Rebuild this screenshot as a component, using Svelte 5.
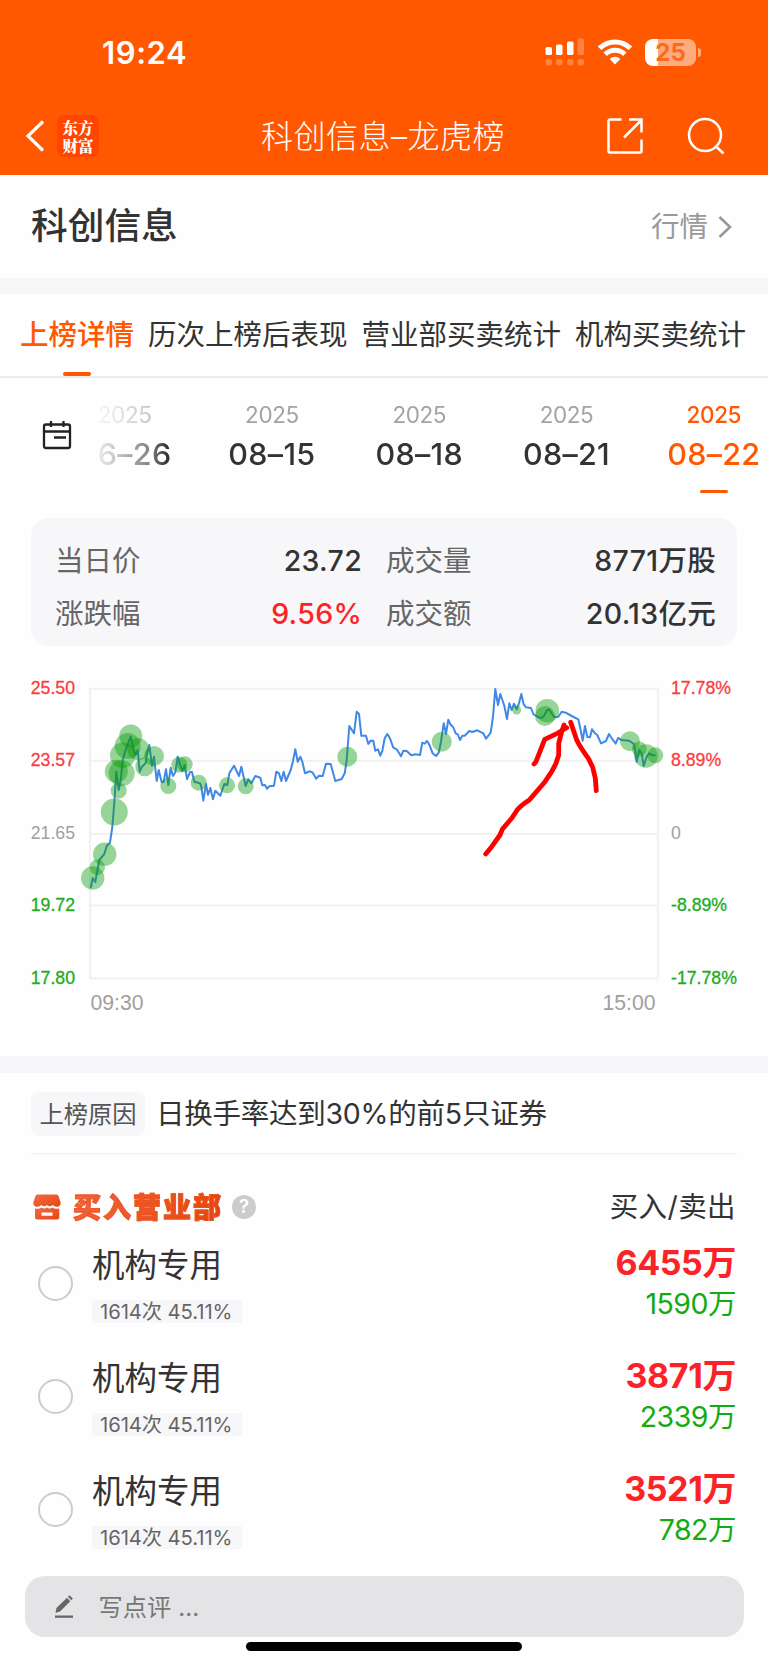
<script lang="ts">
type Bubble = { x: number; y: number; r: number };

const tabs = ['上榜详情', '历次上榜后表现', '营业部买卖统计', '机构买卖统计'];

const dates = [
	{ year: '2025', day: '06–26' },
	{ year: '2025', day: '08–15' },
	{ year: '2025', day: '08–18' },
	{ year: '2025', day: '08–21' },
	{ year: '2025', day: '08–22' },
];

let activeTab = $state(0);
let activeDate = $state(4);

const stats = [
	{ label: '当日价', value: '23.72' },
	{ label: '成交量', value: '8771万股' },
	{ label: '涨跌幅', value: '9.56%', up: true },
	{ label: '成交额', value: '20.13亿元' },
];

const axis = [
	{ y: 18.7, price: '25.50', pct: '17.78%', tone: 'up' },
	{ y: 90.7, price: '23.57', pct: '8.89%', tone: 'up' },
	{ y: 164, price: '21.65', pct: '0', tone: 'flat' },
	{ y: 235.4, price: '19.72', pct: '-8.89%', tone: 'down' },
	{ y: 308.3, price: '17.80', pct: '-17.78%', tone: 'down' },
];

const line = `90.7,218 92.7,208 95.3,212 99.3,190 104.3,184 106.7,176 110,172.7 112.3,157 114.3,133
	116.3,101.7 118.7,120 120.7,110 122.7,90 125,82 127.3,75 130.7,66.7 133.3,78 135.3,85 137.7,80
	139.7,101.7 142,96.7 145.7,93 147.3,81.7 149.3,75 152,95.7 154,86.7 156.7,111 158.7,100
	161.7,112.3 163.7,111.7 166,99.3 168.3,115 170.7,97.7 173,106 175.3,102.3 177.7,86.7 180.3,95
	182.3,101 184.7,95 187,109 190,102 192,102 194.3,111.7 200,113.3 201.3,116.7 203.3,130.7
	206,114 208,124.7 210.3,118 213,129.3 215.3,120.7 220.3,125.7 224.3,114 227.3,115 229.3,103.3
	234,95.7 239,106 241.3,96.7 245.7,116 248.3,109.3 251.3,113.3 255.3,106 260.3,107.7
	262.3,115.3 265,115 267,118.7 269.3,116.3 274,115.7 276.3,101.7 279,103.3 281.3,111
	283.7,101.7 286,111 290.7,100 293,91 295.3,79.3 297.7,91.7 300.3,86.7 302.3,91.7 305,103.3
	310,101.3 312.7,102.7 316.3,108.7 319,105.7 322.7,106 326,93.7 330.7,94 335.3,111 341.7,109
	344.7,103.3 346.7,90 349.3,56 354,63.3 356.7,41.7 359,44 361.3,65.7 366,65.7 368.3,74
	370.7,70.7 373.3,70.7 375.3,80.7 378,79.3 380.3,85.7 382.3,81 384.7,68.3 387.3,64 389.7,67.7
	393.3,77.7 396.7,79.3 401,86.3 403.3,80.7 406.7,81 411.3,85.3 415.3,84.3 420,85 422.3,72.7
	424.7,73.7 427,71 429.3,74.7 432.7,83.3 436,86 438.7,82.7 441,71.7 443.7,53.3 446,64
	448.3,49.7 450.7,54.7 453.3,57.3 455.7,63.3 457.7,64.3 460,70 462.3,65.7 464.7,65.7 469.3,61
	472.3,62 477.3,60.3 483.3,63.3 486,68.7 490.7,62.7 493,46.7 495.3,19 498,35 500.3,24
	504.3,35.7 507,49 509.3,33.3 511.7,40 514,33.7 516.7,39.3 519,33.3 521.3,24 523.7,34.3
	526,37.3 531,38 533.3,44 538.3,47.3 541.7,48 544,46 546.7,40.7 549,39.3 551.7,43.3 554.3,47.3
	558.3,46.7 561.7,41.7 565.7,42.7 571.7,46 578.3,49.3 580.3,58.3 582.7,70.7 585,56 587.3,67
	590,67.3 592,59.3 595,63.3 597.3,65 601,73.3 606,71 609,64 612.3,69 615.7,73.7 618,68
	621.7,70 629.3,70.7 634,74 636.7,91.7 639.3,80 641.7,83.3 643.7,96 646.7,86.7 649.3,83.3
	652,85.3 655.3,85.3`;

const bubbles: Bubble[] = [
	[92.7, 208, 11.7], [97.3, 197.3, 7.7], [104.7, 184.3, 11.7], [114.3, 142, 13.5],
	[118.7, 120.7, 8], [116.3, 101.3, 11.5], [121.7, 103.3, 13], [122.7, 85.3, 12.7],
	[127.7, 76, 13], [130.7, 66, 11.5], [138.3, 79.3, 11], [144.7, 96.7, 9.5],
	[154, 86, 10], [168.3, 116, 8], [179.3, 94.7, 8], [184.7, 94.3, 8],
	[198.7, 112.7, 8], [227, 115.3, 8], [245.7, 116.3, 8], [347.3, 86.7, 10],
	[441.7, 71.7, 10], [516.7, 40, 4.5], [547.3, 40.7, 11.8], [545, 46, 10],
	[630, 71.3, 10], [639.3, 79, 7.5], [646, 86, 11.8], [655.3, 85.3, 8],
].map(([x, y, r]) => ({ x, y, r }));

const seats = [
	{ name: '机构专用', tag: '1614次 45.11%', buy: '6455万', sell: '1590万' },
	{ name: '机构专用', tag: '1614次 45.11%', buy: '3871万', sell: '2339万' },
	{ name: '机构专用', tag: '1614次 45.11%', buy: '3521万', sell: '782万' },
];
</script>

<div class="page">
	<header>
		<div class="status">
			<span class="time">19:24</span>
			<div class="status-icons">
				<svg width="40" height="28" viewBox="0 0 40 28" fill="#fff">
					<rect x="0.5" y="9" width="6.5" height="8" rx="1.6" />
					<rect x="11" y="6.5" width="6.5" height="10.5" rx="1.6" />
					<rect x="22" y="3.5" width="6.5" height="13.5" rx="1.6" />
					<g opacity="0.25">
						<rect x="32.5" y="0.5" width="6.5" height="16.5" rx="1.6" />
						<rect x="0.5" y="21" width="6.5" height="6.5" rx="2.4" />
						<rect x="11" y="21" width="6.5" height="6.5" rx="2.4" />
						<rect x="22" y="21" width="6.5" height="6.5" rx="2.4" />
						<rect x="32.5" y="21" width="6.5" height="6.5" rx="2.4" />
					</g>
				</svg>
				<svg class="wifi" width="34" height="26" viewBox="0 0 34 26" fill="none" stroke="#fff" stroke-width="5">
					<path d="M1.6 9.3a22 22 0 0 1 30.8 0" />
					<path d="M7.2 15.2a14 14 0 0 1 19.6 0" />
					<path d="M17 25.4l-5.3-5.5a7.6 7.6 0 0 1 10.6 0z" fill="#fff" stroke="none" />
				</svg>
				<div class="battery"><span>25</span></div>
				<i class="battery-tip"></i>
			</div>
		</div>
		<div class="nav">
			<svg class="back" width="20" height="32" viewBox="0 0 20 32" fill="none" stroke="#fff" stroke-width="3.2">
				<path d="M18 1.5L3 16l15 14.5" />
			</svg>
			<div class="logo"><span>东方</span><span>财富</span></div>
			<h1>科创信息–龙虎榜</h1>
			<svg class="share" width="36" height="36" viewBox="0 0 36 36" fill="none" stroke="#fff" stroke-width="2.5">
				<path d="M14.5 1.5H3A1.5 1.5 0 0 0 1.5 3v30A1.5 1.5 0 0 0 3 34.5h30a1.5 1.5 0 0 0 1.5-1.5V21.5" />
				<path d="M17 19.5L34 2.500M22 1.5h12.500v13" />
			</svg>
			<svg class="search" width="38" height="38" viewBox="0 0 38 38" fill="none" stroke="#fff" stroke-width="2.5">
				<circle cx="18" cy="18" r="16" />
				<path d="M28.5 29l8 7.5" />
			</svg>
		</div>
	</header>

	<section class="stock">
		<h2>科创信息</h2>
		<span class="quote">行情</span>
		<svg width="14" height="24" viewBox="0 0 14 24" fill="none" stroke="#999" stroke-width="2.6">
			<path d="M1.5 2L12 12 1.5 22" />
		</svg>
	</section>

	<nav class="tabs">
		{#each tabs as tab, i}
			<button class:active={i === activeTab} onclick={() => (activeTab = i)}>{tab}</button>
		{/each}
	</nav>

	<section class="dates">
		<svg width="30" height="30" viewBox="0 0 30 30" fill="none" stroke="#222" stroke-width="2.3">
			<rect x="2" y="4.5" width="26" height="23.5" rx="2" />
			<path d="M2 11.5h26M9 1v6M21.5 1v6M12 17.5h12" />
		</svg>
		<div class="strip">
			{#each dates as date, i}
				<button class="date" class:active={i === activeDate} onclick={() => (activeDate = i)}>
					<span class="year">{date.year}</span>
					<span class="day">{date.day}</span>
				</button>
			{/each}
		</div>
	</section>

	<section class="stats">
		{#each stats as stat}
			<div class="stat">
				<span class="stat-label">{stat.label}</span>
				<span class="stat-value" class:up={stat.up}>{stat.value}</span>
			</div>
		{/each}
	</section>

	<svg class="chart" width="768" height="410" viewBox="0 -24 768 410">
		<g stroke="#f1f1f2" stroke-width="2">
			{#each axis as tick}
				<line x1="89" x2="659" y1={tick.y} y2={tick.y} />
			{/each}
			<line x1="90" x2="90" y1="18" y2="309" />
			<line x1="658" x2="658" y1="18" y2="309" />
		</g>
		{#each axis as tick}
			<text class={tick.tone} x="75" y={tick.y + 5.4} text-anchor="end">{tick.price}</text>
			<text class={tick.tone} x="671" y={tick.y + 5.4}>{tick.pct}</text>
		{/each}
		<text class="hour" x="90.5" y="340">09:30</text>
		<text class="hour" x="655.5" y="340" text-anchor="end">15:00</text>

		<polyline points={line} fill="none" stroke="#4088e8" stroke-width="2" stroke-linejoin="round" />
		{#each bubbles as b}
			<circle cx={b.x} cy={b.y} r={b.r} fill="#0a9b0a" fill-opacity="0.42" />
		{/each}

		<!-- hand-drawn arrow -->
		<g fill="none" stroke="#f00" stroke-width="4.8" stroke-linecap="round" stroke-linejoin="round">
			<path d="M485.7 184L491.7 176.7 500 165 502.3 159.3 511.7 148.3 516.7 140.7Q520 136 529.3 130L545 111.7 551.7 101.7 556 93.3 558.7 85V73.3L561.7 61.7 564 55" />
			<path d="M534 94L536 91.7 544.7 69.3 557.3 63.3 566.7 57.7" />
			<path d="M570.7 52.3L576.7 70Q580 77 588.3 88.3L592.7 97.3 595.3 108.3 596.3 120.7" />
		</g>
	</svg>

	<section class="reason">
		<span class="reason-tag">上榜原因</span>
		<span class="reason-text">日换手率达到30%的前5只证券</span>
	</section>

	<section class="seats">
		<div class="seats-head">
			<svg width="28" height="26" viewBox="0 0 28 26">
				<defs>
					<linearGradient id="shop" x1="0" y1="0" x2="1" y2="1">
						<stop offset="0" stop-color="#f2694a" />
						<stop offset="1" stop-color="#e64810" />
					</linearGradient>
				</defs>
				<path d="M4.5 0.5h19q1.5 0 2 1.5l2.2 6.500q.3 3.500-3 4.200-3 .6-5-1.700-2.700 2.500-5.700 0-3 2.500-5.700 0-2 2.300-5 1.700-3.300-.7-3-4.200L2.500 2q.5-1.500 2-1.500z" fill="url(#shop)" />
				<path d="M2 14.5q4 1 6.5-1 3 2 5.5 0 2.5 2 5.5 0 2.5 2 6.800 1v9q0 2-2 2H4q-2 0-2-2zM8.500 18.500v3.200h11v-3.200z" fill="url(#shop)" fill-rule="evenodd" />
			</svg>
			<h3>买入营业部</h3>
			<span class="help">?</span>
			<span class="legend">买入/卖出</span>
		</div>
		{#each seats as seat}
			<div class="seat">
				<i class="radio"></i>
				<div class="seat-info">
					<span class="seat-name">{seat.name}</span>
					<span class="seat-tag">{seat.tag}</span>
				</div>
				<div class="seat-money">
					<span class="buy">{seat.buy}</span>
					<span class="sell">{seat.sell}</span>
				</div>
			</div>
		{/each}
	</section>

	<footer>
		<div class="comment">
			<svg width="20" height="24" viewBox="0 0 20 24" fill="#666">
				<path d="M1.5 18l1-5L13 2.8l3.3 3.4L6 16.5zM14 1.8l1.5-1.5 3.3 3.2-1.5 1.7z" />
				<rect x="1" y="20.5" width="18" height="2.3" />
			</svg>
			<span>写点评 ...</span>
		</div>
		<div class="home"></div>
	</footer>
</div>

<style>
	:global(body) {
		background: #fff;
	}

	.page {
		width: 768px;
		height: 1666px;
		overflow: hidden;
		display: flex;
		flex-direction: column;
		background: #fefefe;
		color: #333;
		font-family: Inter, 'Noto Sans CJK SC', sans-serif;
	}

	.page * {
		box-sizing: border-box;
	}

	.page > * {
		flex-shrink: 0;
	}

	h1,
	h2,
	h3 {
		margin: 0;
	}

	button {
		padding: 0;
		border: none;
		background: none;
		color: inherit;
		font-family: inherit;
	}

	header {
		height: 175px;
		background: #ff5800;
		color: #fff;
	}

	.status {
		display: flex;
		align-items: center;
		justify-content: space-between;
		height: 97px;
		padding: 7px 67px 0 102px;
	}

	.time {
		margin-top: 1px;
		font-size: 31px;
		font-weight: 600;
		letter-spacing: 0.6px;
		line-height: 36px;
	}

	.status-icons {
		display: flex;
		align-items: center;
	}

	.wifi {
		margin-left: 13px;
	}

	.battery {
		width: 51px;
		height: 27px;
		margin-left: 13px;
		border-radius: 8px;
		background: linear-gradient(to right, #fff 13px, #ffab80 13px);
		color: #ff6a1a;
		font-size: 24px;
		font-weight: 700;
		line-height: 27px;
		text-align: center;
	}

	.battery-tip {
		width: 3px;
		height: 9px;
		margin-left: 2px;
		border-radius: 0 4px 4px 0;
		background: #ffab80;
	}

	.nav {
		display: flex;
		align-items: center;
		height: 78px;
		padding-left: 25px;
	}

	.logo {
		display: flex;
		flex-direction: column;
		align-items: center;
		justify-content: center;
		width: 42px;
		height: 42px;
		margin-left: 12px;
		border-radius: 8px;
		background: #ff4500;
		font-family: 'Noto Serif CJK SC', 'Noto Sans CJK SC', serif;
		font-size: 15.5px;
		font-weight: 900;
		line-height: 18px;
	}

	h1 {
		width: 246px;
		margin: 2px 0 0 162px;
		font-size: 32px;
		font-weight: 300;
		letter-spacing: 0.5px;
		line-height: 40px;
		white-space: nowrap;
	}

	.share {
		margin-left: 100px;
	}

	.search {
		margin-left: 44px;
	}

	.stock {
		display: flex;
		align-items: center;
		height: 103px;
		padding: 0 36px 0 31px;
	}

	h2 {
		flex: 1;
		margin-top: -2px;
		font-size: 36.7px;
		font-weight: 500;
		line-height: 50px;
	}

	.quote {
		margin-right: 10px;
		color: #999;
		font-size: 28.5px;
		line-height: 40px;
	}

	.tabs {
		display: flex;
		gap: 14px;
		height: 100px;
		padding-left: 20px;
		border-top: 16px solid #f7f7fa;
		border-bottom: 2px solid #ececec;
	}

	.tabs button {
		position: relative;
		font-size: 28.5px;
		line-height: 40px;
		white-space: nowrap;
	}

	.tabs .active {
		color: #ff5800;
		font-weight: 500;
	}

	.tabs .active::after,
	.date.active::after {
		content: '';
		position: absolute;
		bottom: 0;
		left: 50%;
		width: 28px;
		height: 4px;
		margin-left: -14px;
		border-radius: 2px;
		background: #ff5800;
	}

	.dates {
		display: flex;
		height: 140px;
	}

	.dates > svg {
		flex: none;
		margin: 42px 25px 0 42px;
	}

	.strip {
		display: flex;
		flex: 1;
		height: 115px;
		overflow: hidden;
		mask-image: linear-gradient(to right, rgba(0, 0, 0, 0.08), rgba(0, 0, 0, 0.6) 52px, #000 70px);
	}

	.date {
		position: relative;
		display: flex;
		flex: none;
		flex-direction: column;
		align-items: center;
		width: 147.3px;
		padding-top: 22px;
	}

	.date:first-child {
		margin-left: -46px;
	}

	.year {
		color: #a3a3a3;
		font-size: 22.5px;
		letter-spacing: -0.4px;
		line-height: 30px;
	}

	.day {
		margin-top: 8px;
		font-size: 30.5px;
		font-weight: 500;
		letter-spacing: 0.3px;
		line-height: 32px;
	}

	.date.active,
	.active .year {
		color: #ff5800;
	}

	.active .year {
		font-weight: 500;
	}

	.date.active::after {
		height: 3px;
	}

	.stats {
		display: grid;
		grid-template-columns: 307px 330px;
		grid-auto-rows: 53px;
		column-gap: 24px;
		height: 128px;
		margin: 0 31px;
		padding: 16px 21px 0 24px;
		border-radius: 18px;
		background: #f7f7fa;
	}

	.stat {
		display: flex;
		align-items: center;
		justify-content: space-between;
		font-size: 28.5px;
		line-height: 40px;
	}

	.stat-label {
		color: #666;
	}

	.stat-value {
		font-weight: 500;
		letter-spacing: 0.3px;
	}

	.stat-value.up {
		color: #fb2328;
	}

	.chart {
		display: block;
	}

	.chart text {
		font-family: 'Liberation Sans', sans-serif;
		font-size: 17.7px;
		stroke-width: 0.3px;
	}

	.chart .up {
		fill: #fb3c40;
		stroke: #fb3c40;
	}

	.chart .down {
		fill: #21ab21;
		stroke: #21ab21;
	}

	.chart .flat {
		fill: #a0a0a0;
	}

	.chart .hour {
		fill: #a0a0a0;
		font-size: 21.2px;
	}

	.reason {
		display: flex;
		align-items: center;
		gap: 12px;
		height: 99px;
		padding: 0 0 1px 31px;
		border-top: 17px solid #f7f7fa;
		background: linear-gradient(#f5f5f6, #f5f5f6) 31px 100% / 706px 2px no-repeat;
		line-height: 40px;
	}

	.reason-tag {
		width: 114px;
		height: 44px;
		border-radius: 7px;
		background: #f7f7fa;
		color: #555;
		font-size: 24.3px;
		line-height: 44px;
		text-align: center;
	}

	.reason-text {
		margin-left: -1px;
		font-size: 28.5px;
		letter-spacing: -0.25px;
	}

	.seats {
		height: 421px;
		padding: 0 32px 0 33px;
	}

	.seats-head {
		display: flex;
		align-items: center;
		height: 83px;
		padding-top: 20px;
	}

	h3 {
		margin: -2px 0 0 12px;
		background: linear-gradient(to right, #f2643c, #e64408);
		background-clip: text;
		-webkit-text-stroke: 0.8px #ec5424;
		color: transparent;
		font-family: 'Noto Sans CJK SC', sans-serif;
		font-size: 28px;
		font-weight: 900;
		letter-spacing: 2px;
		line-height: 36px;
	}

	.help {
		width: 24px;
		height: 24px;
		margin-left: 9px;
		border-radius: 50%;
		background: #ccc;
		color: #fff;
		font-size: 19px;
		font-weight: 600;
		line-height: 24px;
		text-align: center;
	}

	.legend {
		margin-left: auto;
		font-size: 28.5px;
		letter-spacing: 0.4px;
		line-height: 40px;
	}

	.seat {
		display: flex;
		height: 113px;
	}

	.radio {
		width: 35px;
		height: 35px;
		margin: 28px 19px 0 5px;
		border: 2px solid #ccc;
		border-radius: 50%;
	}

	.seat-info {
		display: flex;
		flex: 1;
		flex-direction: column;
		align-items: flex-start;
	}

	.seat-name {
		margin-top: 6px;
		font-size: 32.5px;
		line-height: 44px;
	}

	.seat-tag {
		height: 23px;
		margin-top: 12px;
		padding: 0 10px 0 8px;
		background: #f7f7fa;
		color: #666;
		font-size: 20.3px;
		letter-spacing: -0.1px;
		line-height: 24px;
		white-space: nowrap;
	}

	.seat-money {
		display: flex;
		flex-direction: column;
		align-items: flex-end;
	}

	.buy {
		margin-top: 3px;
		color: #fb2328;
		font-size: 34px;
		font-weight: 700;
		letter-spacing: -0.4px;
		line-height: 44px;
	}

	.sell {
		margin-top: 1px;
		color: #12ab12;
		font-size: 28.5px;
		letter-spacing: -0.5px;
		line-height: 36px;
	}

	footer {
		display: flex;
		flex-direction: column;
		align-items: center;
	}

	.comment {
		display: flex;
		align-items: center;
		width: 719px;
		height: 61px;
		padding-left: 29px;
		border-radius: 20px;
		background: #e4e4e6;
		color: #777;
		font-size: 24.3px;
		line-height: 36px;
	}

	.comment span {
		margin-left: 25px;
	}

	.home {
		width: 276px;
		height: 9px;
		margin-top: 5px;
		border-radius: 5px;
		background: #000;
	}
</style>
